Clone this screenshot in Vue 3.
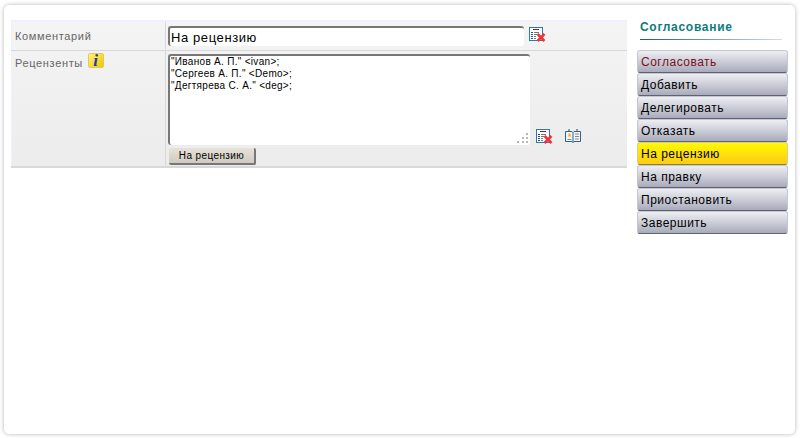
<script setup>
const actions = [
  { label: "Согласовать", first: true },
  { label: "Добавить" },
  { label: "Делегировать" },
  { label: "Отказать" },
  { label: "На рецензию", active: true },
  { label: "На правку" },
  { label: "Приостановить" },
  { label: "Завершить" },
];

const reviewers = `"Иванов А. П." <ivan>;
"Сергеев А. П." <Demo>;
"Дегтярева С. А." <deg>;`;
</script>

<template>
  <div class="page">
    <div class="card">
      <div class="form">
        <div class="row row-comment">
          <div class="label">Комментарий</div>
          <div class="value value-comment">
            <input class="comment" value="На рецензию" />
            <svg class="icon" width="18" height="17" viewBox="0 0 18 17">
              <rect x="1.500" y="1.500" width="13" height="13" fill="#fff" stroke="#2a7aa8" />
              <path d="M5 3.500h6" stroke="#8c1c2c" />
              <path d="M3 6.500h2M3 8.500h2M3 10.500h2M3 12.500h2" stroke="#1c4f86" />
              <path d="M6 6.500h5M6 8.500h3M6 10.500h2M6 12.500h2" stroke="#777" />
              <path d="M9.500 8l7 7M16.500 8l-7 7" stroke="#f0323c" stroke-width="2.500" />
            </svg>
          </div>
        </div>
        <div class="row row-reviewers">
          <div class="label label-reviewers">
            Рецензенты
            <span class="info">i</span>
          </div>
          <div class="value value-reviewers">
            <div class="area-line">
              <div class="area-wrap">
                <textarea class="reviewers" :value="reviewers"></textarea>
                <svg class="grip" width="11" height="11" viewBox="0 0 11 11">
                  <path d="M9 1h2v2H9zM5 5h2v2H5zM9 5h2v2H9zM0 9h2v2H0zM5 9h2v2H5zM9 9h2v2H9z" fill="#b8b8b8" />
                </svg>
              </div>
              <svg class="icon icon-clear" width="18" height="17" viewBox="0 0 18 17">
                <rect x="1.500" y="1.500" width="13" height="13" fill="#fff" stroke="#2a7aa8" />
                <path d="M5 3.500h6" stroke="#8c1c2c" />
                <path d="M3 6.500h2M3 8.500h2M3 10.500h2M3 12.500h2" stroke="#1c4f86" />
                <path d="M6 6.500h5M6 8.500h3M6 10.500h2M6 12.500h2" stroke="#777" />
                <path d="M9.500 8l7 7M16.500 8l-7 7" stroke="#f0323c" stroke-width="2.500" />
              </svg>
              <svg class="icon icon-book" width="18" height="15" viewBox="0 0 18 15">
                <path d="M1.500 2.500h6.500l1 1 1-1h6.500v10h-6.500l-1 1-1-1h-6.500z" fill="#f2f6f8" stroke="#2b628f" />
                <path d="M9 3.500v10" stroke="#2b628f" />
                <path d="M4 1h2M12 1h2" stroke="#999" stroke-width="2" />
                <path d="M3.500 7.500l1-1v-2h2v2l1 1z" fill="#eab11c" />
                <path d="M3.500 10.500h4M11 5h4M11 7.500h4M11 10h4" stroke="#888" />
              </svg>
            </div>
            <button class="review-button">На рецензию</button>
          </div>
        </div>
      </div>

      <aside class="side">
        <h3 class="side-title">Согласование</h3>
        <div class="side-actions">
          <button
            v-for="action in actions"
            :key="action.label"
            class="action"
            :class="{ first: action.first, active: action.active }"
          >
            {{ action.label }}
          </button>
        </div>
      </aside>
    </div>
  </div>
</template>

<style>
html,
body {
  margin: 0;
  background: #fff;
}
</style>

<style scoped>
.page {
  width: 800px;
  height: 438px;
  box-sizing: border-box;
  padding: 5px 5px 4px 4px;
  background: #fff;
  font-family: "Liberation Sans", Arial, sans-serif;
}

.card {
  height: 100%;
  box-sizing: border-box;
  display: flex;
  align-items: flex-start;
  padding: 15px 7px 0 7px;
  background: #fff;
  border-radius: 5px;
  box-shadow: 0 0 4px #b4b4b4;
}

.form {
  width: 616px;
  border-top: 2px solid #eef0fb;
  border-bottom: 2px solid #d8d8d8;
  background: linear-gradient(#f4f4f4, #ececec);
}

.row {
  display: flex;
}

.row-comment {
  height: 28px;
  border-bottom: 1px solid #d8d8d8;
}

.row-reviewers {
  height: 115px;
}

.label {
  width: 150px;
  padding: 8px 0 0 3px;
  border-right: 1px solid #d8d8d8;
  border-left: 1px solid #eef0fb;
  font-size: 11px;
  letter-spacing: 0.65px;
  color: #666;
}

.label-reviewers {
  display: flex;
  align-items: flex-start;
  gap: 5px;
  padding-top: 6px;
  height: 109px;
}

.value {
  padding-left: 2px;
}

.value-comment {
  display: flex;
  align-items: flex-start;
  padding-top: 4px;
}

.comment {
  width: 356px;
  height: 20px;
  box-sizing: border-box;
  padding: 1px 1px;
  border: 0;
  border-top: 2px solid #777;
  border-left: 2px solid #777;
  border-radius: 3px;
  font-family: inherit;
  font-size: 13px;
  letter-spacing: 0.6px;
  color: #000;
  background: #fff;
  outline: none;
}

.icon {
  display: block;
  margin-left: 4px;
}

.area-line {
  display: flex;
  align-items: flex-end;
  padding-top: 3px;
}

.area-wrap {
  position: relative;
  width: 362px;
  height: 91px;
}

.reviewers {
  display: block;
  width: 100%;
  height: 100%;
  box-sizing: border-box;
  margin: 0;
  padding: 0 0 0 1px;
  border: 0;
  border-top: 2px solid #777;
  border-left: 2px solid #777;
  border-radius: 3px;
  font-family: inherit;
  font-size: 10px;
  line-height: 12px;
  letter-spacing: 0.3px;
  color: #000;
  background: #fff;
  outline: none;
  resize: none;
}

.grip {
  position: absolute;
  right: 2px;
  bottom: 2px;
}

.icon-clear {
  margin-left: 5px;
}

.icon-book {
  margin: 0 0 1px 11px;
}

.review-button {
  display: block;
  width: 87px;
  height: 17px;
  margin: 3px 0 0 1px;
  padding: 0;
  border: 0;
  border-right: 2px solid #777;
  border-bottom: 2px solid #777;
  border-radius: 2px;
  background: linear-gradient(#e6e2da, #cfcac2);
  font-family: inherit;
  font-size: 10px;
  letter-spacing: 0.4px;
  color: #000;
}

.info {
  display: block;
  width: 16px;
  height: 15px;
  border-radius: 2px;
  background: linear-gradient(135deg, #fff27a, #f8c400);
  border: 1px solid #e2c860;
  box-sizing: border-box;
  margin-top: -4px;
  font-family: "Liberation Serif", serif;
  font-style: italic;
  font-weight: bold;
  font-size: 17px;
  line-height: 13px;
  text-align: center;
  color: #1c3f9c;
}

.side {
  width: 151px;
  margin-left: 10px;
}

.side-title {
  width: 142px;
  height: 20px;
  box-sizing: border-box;
  margin: 0 0 10px 3px;
  font-size: 12px;
  font-weight: bold;
  line-height: 15px;
  letter-spacing: 0.7px;
  color: #0c7c7c;
  border-bottom: 1px solid;
  border-image: linear-gradient(to right, #1c5a84, #d8dde4) 1;
}

.side-actions {
  display: flex;
  flex-direction: column;
}

.action {
  height: 23px;
  box-sizing: border-box;
  padding: 0 0 0 3px;
  border: 1px solid #c4c6d2;
  border-bottom: 1px solid #5f6272;
  border-radius: 3px;
  background: linear-gradient(#eeeff3, #a9abbb);
  font-family: inherit;
  font-size: 12px;
  letter-spacing: 0.5px;
  text-align: left;
  color: #000;
}

.action.first {
  color: #7c1024;
}

.action.active {
  background: linear-gradient(#fff900, #fccb17);
  border-color: #d8d090 #d8d090 #8a8030;
}
</style>
